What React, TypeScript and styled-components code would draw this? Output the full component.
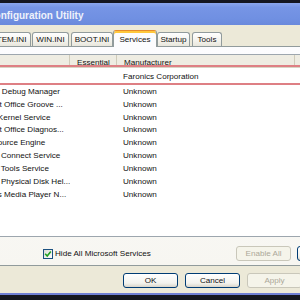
import React from 'react';
import styled, { createGlobalStyle } from 'styled-components';

const GlobalStyle = createGlobalStyle`
  html, body {
    margin: 0;
    padding: 0;
    background: #14161f;
  }
  body {
    font-family: "Liberation Sans", Arial, sans-serif;
  }
`;

type Service = { name: string; maker: string; status: string; marked?: boolean };

const services: Service[] = [
  { name: 'DFServ', maker: 'Faronics Corporation', status: 'Running', marked: true },
  { name: 'Machine Debug Manager', maker: 'Unknown', status: 'Running' },
  { name: 'Microsoft Office Groove ...', maker: 'Unknown', status: 'Stopped' },
  { name: 'Intel(R) Kernel Service', maker: 'Unknown', status: 'Running' },
  { name: 'Microsoft Office Diagnos...', maker: 'Unknown', status: 'Stopped' },
  { name: 'Office Source Engine', maker: 'Unknown', status: 'Stopped' },
  { name: 'VMware Connect Service', maker: 'Unknown', status: 'Running' },
  { name: 'VMware Tools Service', maker: 'Unknown', status: 'Running' },
  { name: 'VMware Physical Disk Hel...', maker: 'Unknown', status: 'Running' },
  { name: 'Windows Media Player N...', maker: 'Unknown', status: 'Stopped' },
];

const tabs = [
  { label: 'SYSTEM.INI', width: 55, gap: 0 },
  { label: 'WIN.INI', width: 37, gap: 1 },
  { label: 'BOOT.INI', width: 42, gap: 2 },
  { label: 'Services', width: 44, gap: 0, active: true },
  { label: 'Startup', width: 33, gap: 0 },
  { label: 'Tools', width: 30, gap: 2 },
];

export default function App() {
  return (
    <>
      <GlobalStyle />
      <Screen>
        <Window>
          <TitleBar>
            <TitleText>System Configuration Utility</TitleText>
          </TitleBar>

          <Body>
            <TabStrip>
              {tabs.map((t) => (
                <Tab key={t.label} $w={t.width} $gap={t.gap} $active={!!t.active}>
                  {t.label}
                </Tab>
              ))}
            </TabStrip>

            <Panel>
              <List>
                <Highlight />
                <HeaderRow>
                  <HeadCell $w={127}>Service</HeadCell>
                  <HeadCell $w={47}>Essential</HeadCell>
                  <HeadCell $w={178}>Manufacturer</HeadCell>
                  <HeadCell $w={56}>Status</HeadCell>
                </HeaderRow>
                {services.map((s) => (
                  <Row key={s.name} $marked={!!s.marked}>
                    <NameCell>
                      <RowCheck />
                      <span>{s.name}</span>
                    </NameCell>
                    <Cell $w={47} />
                    <Cell $w={178}>{s.maker}</Cell>
                    <Cell $w={56}>{s.status}</Cell>
                  </Row>
                ))}
              </List>

              <Controls>
                <CheckLabel>
                  <CheckBox>
                    <svg width="8" height="8" viewBox="0 0 8 8">
                      <polyline
                        points="1.2,3.8 3.2,6 6.8,1.6"
                        fill="none"
                        stroke="#21a121"
                        strokeWidth="1.6"
                      />
                    </svg>
                  </CheckBox>
                  Hide All Microsoft Services
                </CheckLabel>
                <PanelButtons>
                  <Button $disabled>Enable All</Button>
                  <Button>Disable All</Button>
                </PanelButtons>
              </Controls>
            </Panel>

            <DialogButtons>
              <Button>OK</Button>
              <Button>Cancel</Button>
              <Button $disabled>Apply</Button>
              <Button>Help</Button>
            </DialogButtons>
          </Body>
        </Window>
      </Screen>
    </>
  );
}

// Styled Components
const Screen = styled.div`
  width: 300px;
  height: 300px;
  overflow: hidden;
  background: #14161f;
  padding-top: 3px;
  box-sizing: border-box;
`;

const Window = styled.div`
  width: 448px;
  margin-left: -80px;
  background: #ece9d8;
  border-bottom: 2px solid #6f7fd4;
`;

const TitleBar = styled.div`
  height: 22px;
  box-sizing: border-box;
  padding: 3px 0 0 29px;
  display: flex;
  align-items: center;
  background: linear-gradient(to bottom, #8aa6ec 0%, #7695e5 20%, #7090e2 70%, #6a89dc 100%);
`;

const TitleText = styled.span`
  font-size: 10px;
  font-weight: bold;
  line-height: 12px;
  color: #eef2fb;
  white-space: nowrap;
`;

const Body = styled.div`
  padding: 5px 0 5px;
`;

const TabStrip = styled.div`
  height: 16px;
  display: flex;
  align-items: flex-end;
  padding-left: 56px;
`;

const Tab = styled.div<{ $w: number; $gap: number; $active: boolean }>`
  position: relative;
  z-index: ${(p) => (p.$active ? 1 : 0)};
  width: ${(p) => p.$w}px;
  height: ${(p) => (p.$active ? 17 : 14)}px;
  margin-left: ${(p) => p.$gap}px;
  margin-bottom: ${(p) => (p.$active ? -1 : 0)}px;
  box-sizing: border-box;
  padding-top: ${(p) => (p.$active ? 3 : 1)}px;
  border: 1px solid #919b9c;
  border-bottom: none;
  border-top-color: ${(p) => (p.$active ? '#e68b2c' : '#919b9c')};
  border-radius: 3px 3px 0 0;
  background: ${(p) =>
    p.$active ? '#fcfcfe' : 'linear-gradient(to bottom, #ffffff, #f3f2ec 60%, #e8e6dc)'};
  box-shadow: ${(p) => (p.$active ? 'inset 0 2px 0 #ffc83c' : 'none')};
  font-size: 8.1px;
  line-height: 11px;
  color: #111;
  text-align: center;
  white-space: nowrap;
`;

const Panel = styled.div`
  margin: 0 8px 0 16px;
  height: 220px;
  box-sizing: border-box;
  border: 1px solid #919b9c;
  padding: 7px 7px 4px 5px;
  background: linear-gradient(to bottom, #fcfcfe, #f7f6f1);
  display: flex;
  flex-direction: column;
`;

const List = styled.div`
  position: relative;
  height: 183px;
  box-sizing: border-box;
  border: 1px solid #9da6ae;
  background: #ffffff;
  overflow: hidden;
`;

const Highlight = styled.div`
  position: absolute;
  z-index: 2;
  top: 10px;
  left: 30px;
  right: 0;
  height: 20px;
  box-sizing: border-box;
  border-top: 2px solid #de7f84;
  border-bottom: 2px solid #de7f84;
  pointer-events: none;
`;

const HeaderRow = styled.div`
  display: flex;
  height: 13px;
  box-sizing: border-box;
  background: #eeece2;
  border-bottom: 2px solid #d8d4c4;
`;

const HeadCell = styled.div<{ $w: number }>`
  width: ${(p) => p.$w}px;
  flex: none;
  box-sizing: border-box;
  padding: 3px 0 0 7px;
  border-right: 1px solid #cfcbba;
  font-size: 8.1px;
  line-height: 9px;
  color: #111;
  white-space: nowrap;
  overflow: hidden;
`;

const Row = styled.div<{ $marked: boolean }>`
  display: flex;
  align-items: center;
  height: ${(p) => (p.$marked ? '17px' : '12.85px')};
`;

const Cell = styled.div<{ $w: number }>`
  width: ${(p) => p.$w}px;
  flex: none;
  box-sizing: border-box;
  padding-left: 6px;
  font-size: 8.1px;
  color: #111;
  white-space: nowrap;
  overflow: hidden;
`;

const NameCell = styled.div`
  width: 127px;
  flex: none;
  display: flex;
  align-items: center;
  gap: 12px;
  padding-left: 4px;
  box-sizing: border-box;
  font-size: 8.1px;
  color: #111;
  white-space: nowrap;
  overflow: hidden;
`;

const RowCheck = styled.span`
  width: 10px;
  height: 10px;
  flex: none;
  box-sizing: border-box;
  border: 1px solid #1c5180;
  background: #f4f4f0;
`;

const Controls = styled.div`
  margin-top: 9px;
  height: 15px;
  display: flex;
  align-items: center;
  padding-left: 101px;
`;

const CheckLabel = styled.label`
  display: flex;
  align-items: center;
  gap: 2px;
  font-size: 8.1px;
  color: #111;
  white-space: nowrap;
`;

const CheckBox = styled.span`
  width: 10px;
  height: 10px;
  box-sizing: border-box;
  border: 1px solid #1c5180;
  background: linear-gradient(135deg, #dcdcd7, #ffffff);
  display: flex;
  align-items: center;
  justify-content: center;
`;

const PanelButtons = styled.div`
  margin-left: auto;
  display: flex;
  gap: 6px;
`;

const DialogButtons = styled.div`
  margin-top: 7px;
  display: flex;
  gap: 7px;
  padding-left: 203px;
`;

const Button = styled.div<{ $disabled?: boolean }>`
  width: 55px;
  height: 15px;
  flex: none;
  box-sizing: border-box;
  border: 1px solid ${(p) => (p.$disabled ? '#c9c7ba' : '#003c74')};
  border-radius: 3px;
  background: ${(p) =>
    p.$disabled ? '#f5f4ea' : 'linear-gradient(to bottom, #ffffff, #f3f3ee 70%, #d9d5ca)'};
  display: flex;
  align-items: center;
  justify-content: center;
  font-size: 8.1px;
  color: ${(p) => (p.$disabled ? '#aca899' : '#111')};
  white-space: nowrap;
`;
